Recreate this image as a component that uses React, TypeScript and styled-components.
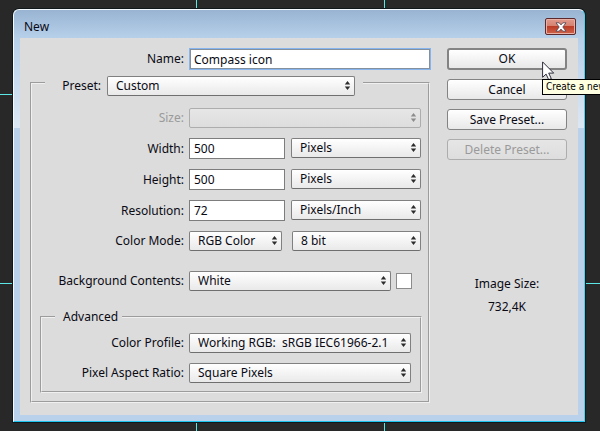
import React from "react";
import styled, { createGlobalStyle, css } from "styled-components";

const GlobalStyle = createGlobalStyle`
  * { box-sizing: border-box; }
  body {
    margin: 0;
    background: #282828;
    color: #0a0a14;
    font-family: "Noto Sans", sans-serif;
    font-size: 12px;
    line-height: 16px;
  }
`;

const guide = "#5ce6e6";

const Canvas = styled.main`
  min-height: 100vh;
  padding: 9px 15px 10px 13px;
  overflow: hidden;
  background:
    linear-gradient(${guide}, ${guide}) 196px 0 / 1px 100% no-repeat,
    linear-gradient(${guide}, ${guide}) 384px 0 / 1px 100% no-repeat,
    linear-gradient(${guide}, ${guide}) 0 94px / 100% 1px no-repeat,
    linear-gradient(${guide}, ${guide}) 0 283px / 100% 1px no-repeat,
    #282828;
`;

const Dialog = styled.section`
  padding: 0 6px 6px;
  border: 1px solid;
  border-color: #f4f9fd #45d3ee #1cc4ee #f4f9fd;
  border-radius: 6px 6px 0 0;
  box-shadow: 0 0 0 1px #10181c;
  background:
    linear-gradient(#98b4d2 0, #b7d0ea 28px, #dbe7f4 118px, #b9d1ea 118px);
`;

const TitleBar = styled.header`
  display: flex;
  align-items: flex-start;
  justify-content: space-between;
  height: 28px;
  padding: 8px 2px 0 4px;
`;

const Title = styled.h1`
  margin: 0;
  font: 12px/17px "Noto Sans", sans-serif;
`;

const CloseButton = styled.button`
  display: grid;
  place-items: center;
  width: 31px;
  height: 17px;
  padding: 0;
  border: 1px solid #5c2a2c;
  border-radius: 2px;
  box-shadow: inset 0 0 0 1px #e9b0a6;
  background: linear-gradient(#e09a8c 0, #d5806f 48%, #bb3c27 50%, #d0634a 100%);
`;

const Body = styled.form`
  display: grid;
  grid-template-columns: minmax(0, 1fr) 120px;
  gap: 16px;
  padding: 10px 11px 12px 10px;
  background: #dcdcdc;
`;

const Row = styled.div<{ $label?: number; $spaced?: boolean }>`
  display: grid;
  grid-template-columns: ${(p) => p.$label ?? 144}px minmax(0, 1fr);
  column-gap: 5px;
  align-items: center;
  min-height: 20px;
  ${(p) => p.$spaced && css`margin-top: 10px;`}
`;

const Label = styled.label<{ $muted?: boolean }>`
  text-align: right;
  white-space: nowrap;
  color: ${(p) => (p.$muted ? "#9a9a9a" : "#0a0a14")};
`;

const Controls = styled.div<{ $gap?: number; $end?: number }>`
  display: flex;
  align-items: flex-start;
  gap: ${(p) => p.$gap ?? 6}px;
  padding-right: ${(p) => p.$end ?? 0}px;
`;

const TextBox = styled.input<{ $short?: boolean }>`
  width: ${(p) => (p.$short ? "96px" : "100%")};
  height: 21px;
  padding: 0 4px;
  border: 1px solid #7d7d7d;
  outline: 0;
  background: #fff;
  color: #0a0a14;
  font: inherit;
`;

const NameBox = styled(TextBox)`
  height: 22px;
  border: 1px solid #86b4ee;
  box-shadow: inset 0 0 0 1px #84909c;
`;

const SelectFrame = styled.span<{ $width?: number }>`
  display: grid;
  align-items: center;
  ${(p) => (p.$width ? css`width: ${p.$width}px;` : css`flex: 1; min-width: 0;`)}
`;

const SelectBox = styled.select`
  grid-area: 1 / 1;
  width: 100%;
  height: 20px;
  padding: 0 14px 0 8px;
  appearance: none;
  border: 1px solid #808080;
  border-bottom-color: #6f6f6f;
  border-radius: 2px;
  background: linear-gradient(#ffffff, #e9e9e9);
  color: #0a0a14;
  font: inherit;
  &:disabled {
    border-color: #adadad;
    background: linear-gradient(#e6e6e6, #dddddd);
    opacity: 1;
  }
`;

const Arrows = styled.svg<{ $muted?: boolean }>`
  grid-area: 1 / 1;
  justify-self: end;
  width: 7px;
  height: 9px;
  margin: 0 4px 2px 0;
  fill: ${(p) => (p.$muted ? "#8c8c8c" : "#2c2c2c")};
  pointer-events: none;
`;

const Group = styled.fieldset<{ $nested?: boolean }>`
  min-width: 0;
  border: 2px groove #f0f0f0;
  ${(p) =>
    p.$nested
      ? css`margin: 18px -1px 0 0; padding: 0 9px 8px 0;`
      : css`margin: 0 1px 0 0; padding: 0 7px 8px 8px;`}
`;

const PresetLegend = styled.legend`
  display: flex;
  align-items: flex-start;
  gap: 6px;
  height: 14px;
  margin-left: 5px;
  padding: 0 8px 0 0;
`;

const PresetLabel = styled(Label)`
  width: 56px;
  line-height: 20px;
`;

const AdvancedLegend = styled.legend`
  margin-left: 13px;
  padding: 0 4px 0 8px;
`;

const Fields = styled.div<{ $top: number; $gap: number }>`
  display: grid;
  gap: ${(p) => p.$gap}px;
  padding-top: ${(p) => p.$top}px;
`;

const FormColumn = styled.div`
  display: grid;
  gap: 6px;
  align-content: start;
`;

const Swatch = styled.button`
  width: 16px;
  height: 16px;
  margin-top: 2px;
  padding: 0;
  border: 1px solid #8c8c8c;
  background: #fff;
`;

const Side = styled.aside`
  display: flex;
  flex-direction: column;
  gap: 9px;
`;

const ActionButton = styled.button<{ $primary?: boolean }>`
  width: 100%;
  height: ${(p) => (p.$primary ? 22 : 21)}px;
  padding: 0;
  border: ${(p) => (p.$primary ? 2 : 1)}px solid #838383;
  border-radius: 3px;
  background: linear-gradient(#ffffff, #e8e8e8);
  color: #0a0a14;
  font: inherit;
  &:disabled {
    border-color: #adadad;
    background: linear-gradient(#e6e6e6, #dddddd);
    color: #9a9a9a;
  }
`;

const PrimaryAction = styled.div`
  position: relative;
  display: flex;
`;

const Pointer = styled.svg`
  position: absolute;
  z-index: 2;
  top: 13px;
  left: 95px;
  width: 13px;
  height: 19px;
  pointer-events: none;
`;

const Tooltip = styled.span`
  position: absolute;
  z-index: 3;
  top: 31px;
  left: 95px;
  width: 128px;
  height: 16px;
  padding: 0 3px;
  border: 1px solid #000;
  background: #ffffe1;
  color: #000;
  font: 10px/14px "DejaVu Sans Condensed", sans-serif;
  white-space: nowrap;
`;

const SizeInfo = styled.p`
  margin: 103px 0 0;
  line-height: 23px;
  text-align: center;
`;

const SizeValue = styled.output`
  display: block;
`;

type SelectProps = { id: string; value?: string; width?: number; disabled?: boolean; label?: string };

function Select({ id, value = "", width, disabled, label }: SelectProps) {
  return (
    <SelectFrame $width={width}>
      <SelectBox id={id} disabled={disabled} aria-label={label}>
        <option>{value}</option>
      </SelectBox>
      <Arrows $muted={disabled} viewBox="0 0 7 9" aria-hidden="true">
        <path d="M3.5 0 6.2 3.6h-5.4zM3.5 9 .8 5.4h5.4z" />
      </Arrows>
    </SelectFrame>
  );
}

const measures = [
  { id: "width", label: "Width:", value: "500", unit: "Pixels" },
  { id: "height", label: "Height:", value: "500", unit: "Pixels" },
  { id: "resolution", label: "Resolution:", value: "72", unit: "Pixels/Inch" },
];

export default function App() {
  return (
    <>
      <GlobalStyle />
      <Canvas>
        <Dialog role="dialog" aria-labelledby="dialog-title">
          <TitleBar>
            <Title id="dialog-title">New</Title>
            <CloseButton type="button" aria-label="Close">
              <svg width="12" height="10" viewBox="0 0 12 10" aria-hidden="true">
                <path
                  d="M1 .8h3.2L6 2.9 7.8.8H11L7.8 5 11 9.2H7.8L6 7.1 4.2 9.2H1L4.2 5z"
                  fill="#fff"
                  stroke="#5b4a55"
                  strokeWidth=".9"
                />
              </svg>
            </CloseButton>
          </TitleBar>
          <Body onSubmit={(e) => e.preventDefault()}>
            <FormColumn>
              <Row $label={154}>
                <Label htmlFor="name">Name:</Label>
                <NameBox id="name" defaultValue="Compass icon" />
              </Row>
              <Group>
                <PresetLegend>
                  <PresetLabel htmlFor="preset">Preset:</PresetLabel>
                  <Select id="preset" value="Custom" width={248} />
                </PresetLegend>
                <Fields $top={18} $gap={10}>
                  <Row>
                    <Label htmlFor="size" $muted>Size:</Label>
                    <Select id="size" disabled />
                  </Row>
                  {measures.map((m) => (
                    <Row key={m.id}>
                      <Label htmlFor={m.id}>{m.label}</Label>
                      <Controls>
                        <TextBox id={m.id} $short defaultValue={m.value} />
                        <Select id={`${m.id}-unit`} value={m.unit} label={`${m.label} unit`} />
                      </Controls>
                    </Row>
                  ))}
                  <Row>
                    <Label htmlFor="mode">Color Mode:</Label>
                    <Controls $gap={10}>
                      <Select id="mode" value="RGB Color" width={93} />
                      <Select id="depth" value="8 bit" label="Bit depth" />
                    </Controls>
                  </Row>
                  <Row $spaced>
                    <Label htmlFor="background">Background Contents:</Label>
                    <Controls $gap={5} $end={9}>
                      <Select id="background" value="White" />
                      <Swatch type="button" aria-label="Background color" />
                    </Controls>
                  </Row>
                </Fields>
                <Group $nested>
                  <AdvancedLegend>Advanced</AdvancedLegend>
                  <Fields $top={8} $gap={10}>
                    <Row $label={142}>
                      <Label htmlFor="profile">Color Profile:</Label>
                      <Select id="profile" value={"Working RGB:\u00a0 sRGB IEC61966-2.1"} />
                    </Row>
                    <Row $label={142}>
                      <Label htmlFor="aspect">Pixel Aspect Ratio:</Label>
                      <Select id="aspect" value="Square Pixels" />
                    </Row>
                  </Fields>
                </Group>
              </Group>
            </FormColumn>
            <Side>
              <PrimaryAction>
                <ActionButton $primary type="submit" aria-describedby="ok-tip">OK</ActionButton>
                <Pointer viewBox="0 0 13 19" aria-hidden="true">
                  <path
                    d="M.6.9v15.4l3.5-3.2 2.6 5.6 2.6-1.1-2.6-5.5h5z"
                    fill="#fff"
                    stroke="#2c2c3c"
                  />
                </Pointer>
                <Tooltip id="ok-tip" role="tooltip">Create a new</Tooltip>
              </PrimaryAction>
              <ActionButton type="button">Cancel</ActionButton>
              <ActionButton type="button">Save Preset...</ActionButton>
              <ActionButton type="button" disabled>Delete Preset...</ActionButton>
              <SizeInfo>
                Image Size:
                <SizeValue>732,4K</SizeValue>
              </SizeInfo>
            </Side>
          </Body>
        </Dialog>
      </Canvas>
    </>
  );
}
